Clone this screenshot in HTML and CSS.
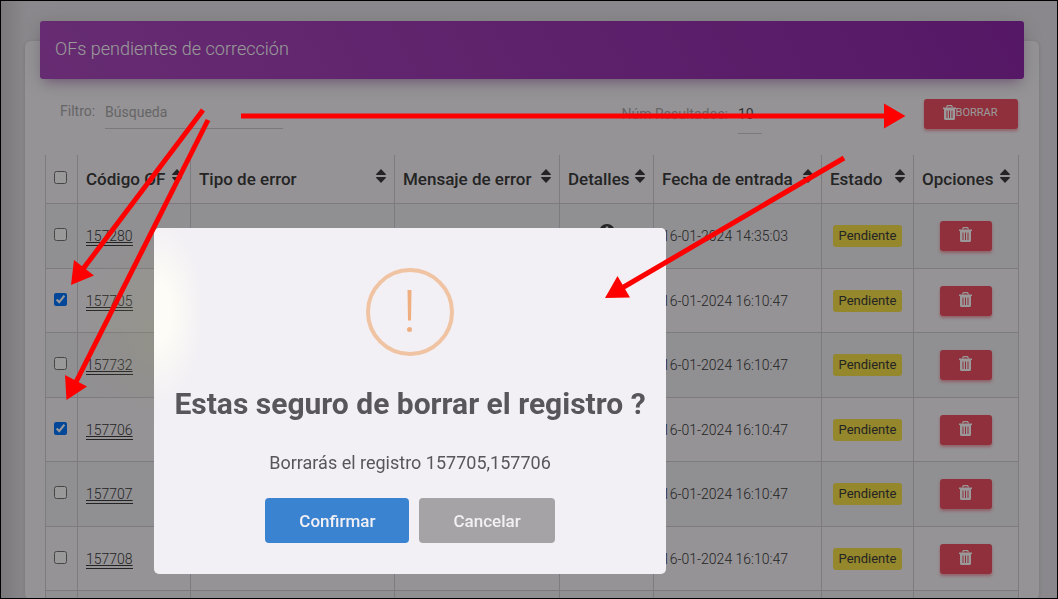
FILE: index.html
```html
<!DOCTYPE html>
<html lang="es">
<head>
    <meta charset="UTF-8">
    <meta name="viewport" content="width=device-width, initial-scale=1.0">
    <title>OFs pendientes de corrección</title>
    <link rel="stylesheet" href="styles.css">
</head>
<body>
    <!-- Shared icons -->
    <svg class="sprite" aria-hidden="true">
        <symbol id="trash" viewBox="0 0 13 15">
            <path d="M0 2.500h13v1.600H0z"/>
            <path d="M3.500 2.600L4.400.6h4.200l.9 2" fill="none" stroke="currentColor" stroke-width="1.200"/>
            <path fill-rule="evenodd" d="M1 4h11v9.400c0 .9-.6 1.500-1.500 1.500h-8C1.600 14.900 1 14.300 1 13.400zM3.500 5.400v7.600h1V5.400zM6 5.400v7.600h1V5.400zM8.500 5.400v7.600h1V5.400z"/>
        </symbol>
        <symbol id="sort" viewBox="0 0 10 14">
            <path d="M5 0l5 5.200q0 .8-.8.8H.8Q0 6 0 5.200zM5 14l5-5.200q0-.8-.8-.8H.8Q0 8 0 8.800z"/>
        </symbol>
        <symbol id="info" viewBox="0 0 16 16">
            <path fill-rule="evenodd" d="M8 0a8 8 0 1 0 0 16A8 8 0 0 0 8 0zM6.700 2.600h2.600v2.300H6.700zM6.200 6.800h3v5h1v1.400H6v-1.400h1V8.200h-.8z"/>
        </symbol>
    </svg>

    <main class="page">
        <section class="card">
            <header class="card-header">
                <h1 class="card-title">OFs pendientes de corrección</h1>
            </header>
            <form class="toolbar">
                <div class="field">
                    <label for="filtro">Filtro:</label>
                    <input class="search" id="filtro" type="text" placeholder="Búsqueda">
                </div>
                <div class="field results">
                    <label for="num">Núm Resultados:</label>
                    <select class="count" id="num"><option>10</option><option>25</option><option>50</option></select>
                </div>
                <button class="btn-danger btn-borrar" type="button"><svg class="trash"><use href="#trash"/></svg>BORRAR</button>
            </form>
            <table class="table">
                <colgroup>
                    <col class="c-check"><col class="c-code"><col class="c-type"><col class="c-msg">
                    <col class="c-detail"><col class="c-date"><col class="c-state"><col class="c-options">
                </colgroup>
                <thead>
                    <tr>
                        <th><input class="check" type="checkbox" aria-label="Seleccionar todos"></th>
                        <th><div class="th">Código OF<svg class="sort"><use href="#sort"/></svg></div></th>
                        <th><div class="th">Tipo de error<svg class="sort"><use href="#sort"/></svg></div></th>
                        <th><div class="th">Mensaje de error<svg class="sort"><use href="#sort"/></svg></div></th>
                        <th><div class="th">Detalles<svg class="sort"><use href="#sort"/></svg></div></th>
                        <th><div class="th">Fecha de entrada<svg class="sort"><use href="#sort"/></svg></div></th>
                        <th><div class="th">Estado<svg class="sort"><use href="#sort"/></svg></div></th>
                        <th><div class="th">Opciones<svg class="sort"><use href="#sort"/></svg></div></th>
                    </tr>
                </thead>
                <tbody id="rows"></tbody>
            </table>
        </section>
    </main>

    <div class="overlay"></div>

    <div class="modal" role="dialog" aria-modal="true" aria-labelledby="modal-title">
        <svg class="modal-icon" viewBox="0 0 88 88">
            <circle cx="44" cy="44" r="42" fill="none" stroke="#f0c3a2" stroke-width="4"/>
            <path d="M41.500 22h4l-.5 30.500h-3z" fill="#efae80"/>
            <circle cx="43.500" cy="61.500" r="2.500" fill="#efae80"/>
        </svg>
        <h2 class="modal-title" id="modal-title">Estas seguro de borrar el registro ?</h2>
        <p class="modal-text">Borrarás el registro 157705,157706</p>
        <div class="modal-actions">
            <button class="btn btn-confirm" type="button">Confirmar</button>
            <button class="btn btn-cancel" type="button">Cancelar</button>
        </div>
    </div>

    <!-- Help arrows -->
    <svg class="arrows" width="1058" height="599" viewBox="0 0 1058 599" aria-hidden="true">
        <g stroke="#f00" stroke-width="5">
            <path d="M241 116H886"/>
            <path d="M203 110L83 269"/>
            <path d="M208 120L76 382"/>
            <path d="M844 158L622 288"/>
        </g>
        <g fill="#f00">
            <path d="M884 103.500L905.500 116L884 128.500z"/>
            <path d="M71 285L74 260L94 275.500z"/>
            <path d="M66.500 400L65 375L87 386.500z"/>
            <path d="M605 298L617.500 276L630 297.500z"/>
        </g>
    </svg>

    <script src="script.js"></script>
</body>
</html>
```
FILE: script.js
```js
const rows = [
    { code: "157280", date: "16-01-2024 14:35:03", checked: false },
    { code: "157705", date: "16-01-2024 16:10:47", checked: true },
    { code: "157732", date: "16-01-2024 16:10:47", checked: false },
    { code: "157706", date: "16-01-2024 16:10:47", checked: true },
    { code: "157707", date: "16-01-2024 16:10:47", checked: false },
    { code: "157708", date: "16-01-2024 16:10:47", checked: false }
];

const rowHtml = (row) => `
    <tr>
        <td><input class="check" type="checkbox" aria-label="${row.code}" ${row.checked ? "checked" : ""}></td>
        <td><a class="code" href="#">${row.code}</a></td>
        <td></td>
        <td></td>
        <td><svg class="info"><use href="#info"/></svg></td>
        <td>${row.date}</td>
        <td class="center"><span class="badge">Pendiente</span></td>
        <td class="center"><button class="btn-danger" type="button" aria-label="Borrar"><svg class="trash"><use href="#trash"/></svg></button></td>
    </tr>`;

// Short empty row closes the list
document.getElementById("rows").innerHTML =
    rows.map(rowHtml).join("") + `<tr class="tail">` + "<td></td>".repeat(8) + "</tr>";
```
FILE: styles.css
```css
* {
    box-sizing: border-box;
}
body {
    margin: 0;
    font-family: Roboto, sans-serif;
    font-size: 14px;
    font-weight: 300;
    color: #3c3c3c;
    background: linear-gradient(90deg, #ccc9ce 0, #e6e3e9 26px, #e6e3e9 100%);
}
button,
input,
select {
    font-family: inherit;
}
svg {
    fill: currentColor;
}
.sprite {
    display: none;
}
.page {
    height: 100vh;
    overflow: hidden;
    padding: 41px 19px 0 25px;
}
.card {
    display: flow-root;
    background: #f8f5fa;
    border-radius: 6px;
    padding: 0 20px;
    box-shadow: 0 1px 4px rgba(0, 0, 0, 0.14);
}
.card-header {
    margin: -20px -5px 0;
    padding: 14px 15px 16px;
    border-radius: 3px;
    background: linear-gradient(60deg, #ab4abe, #8e28aa);
    box-shadow: 0 4px 20px rgba(0, 0, 0, 0.14), 0 7px 10px -5px rgba(156, 39, 176, 0.4);
}
.card-title {
    margin: 0;
    font-size: 18px;
    font-weight: 300;
    line-height: 28px;
    color: #fff;
}

/* Filter bar */
.toolbar {
    display: flex;
    align-items: flex-start;
    padding: 20px 1px 0 15px;
    height: 76px;
}
.field {
    display: flex;
    align-items: flex-start;
    gap: 10px;
    font-weight: 400;
    line-height: 24px;
    color: #aaa;
}
.search,
.count {
    border: 0;
    border-bottom: 1px solid #ccc;
    border-radius: 0;
    padding: 0;
    background: transparent;
    font-size: 14px;
    color: #555;
}
.search {
    width: 178px;
    height: 30px;
    padding-bottom: 4px;
}
.search::placeholder {
    color: #aaa;
}
.results {
    margin: 0 162px 0 auto;
    padding-top: 3px;
}
.count {
    width: 24px;
    height: 32px;
    padding-bottom: 8px;
    appearance: none;
}
.btn-danger {
    display: inline-flex;
    align-items: center;
    justify-content: center;
    width: 52px;
    height: 30px;
    padding: 0 2px 3px 0;
    border: 0;
    border-radius: 3px;
    color: #fff;
    background: #f05064;
    box-shadow: 0 2px 3px rgba(240, 80, 100, 0.5);
    font-size: 11px;
}
.btn-borrar {
    width: 94px;
}
.trash {
    width: 13px;
    height: 15px;
}

/* Table */
.table {
    width: 100%;
    table-layout: fixed;
    border-spacing: 0;
    border-left: 1px solid #d2ced5;
}
.c-check { width: 32px; }
.c-code { width: 113px; }
.c-msg { width: 165px; }
.c-detail { width: 94px; }
.c-date { width: 168px; }
.c-state { width: 92px; }
.c-options { width: 105px; }
th,
td {
    padding: 0 8px;
    border-right: 1px solid #d2ced5;
    border-bottom: 1px solid #d2ced5;
    text-align: left;
    white-space: nowrap;
}
th {
    height: 49px;
    font-size: 17px;
    font-weight: 500;
}
td {
    height: 64px;
}
tr:nth-child(odd) td {
    height: 65px;
}
tr.tail td {
    height: 9px;
}
tbody tr:nth-child(odd) {
    background: #f1eef3;
}
.th {
    display: flex;
    align-items: center;
    justify-content: space-between;
}
.sort {
    width: 10px;
    height: 14px;
    margin-bottom: 6px;
}
.center {
    text-align: center;
}
.check {
    display: block;
    width: 13px;
    height: 13px;
    margin: 0 0 3px;
}
.code {
    padding-bottom: 1px;
    border-bottom: 1px solid #3c3c3c;
    color: inherit;
    text-decoration: underline;
}
.info {
    display: block;
    width: 16px;
    height: 16px;
    margin: 0 auto 9px;
}
.badge {
    display: inline-block;
    padding: 0 6px;
    border-radius: 3px;
    background: #f7e14a;
    font-size: 13px;
    font-weight: 400;
    line-height: 22px;
}

/* Confirmation dialog */
.overlay {
    position: fixed;
    inset: 0;
    border: 1px solid #000;
    background: radial-gradient(ellipse 90px 100px at 165px 325px, rgba(150, 150, 110, 0.3), transparent), rgba(0, 0, 0, 0.4);
}
.modal {
    position: absolute;
    top: 228px;
    left: 154px;
    width: 512px;
    padding: 40px 20px 31px;
    display: flex;
    flex-direction: column;
    align-items: center;
    border-radius: 5px;
    background: radial-gradient(ellipse 44px 90px at 4px 84px, #fdfcf6 30%, #f2f0f4 100%);
    color: #58565a;
}
.modal-icon {
    width: 88px;
    height: 88px;
}
.modal-title {
    margin: 28px 0 0;
    font-size: 30px;
    font-weight: 700;
    line-height: 40px;
    white-space: nowrap;
}
.modal-text {
    margin: 26px 0 0;
    font-size: 18px;
    font-weight: 400;
    line-height: 26px;
}
.modal-actions {
    display: flex;
    gap: 10px;
    margin-top: 22px;
}
.btn {
    height: 45px;
    padding: 0 34px;
    border: 0;
    border-radius: 4px;
    color: #f2f0f4;
    font-size: 17px;
    font-weight: 500;
}
.btn-confirm {
    background: #3a83d0;
}
.btn-cancel {
    background: #a5a3a6;
}
.arrows {
    position: absolute;
    top: 0;
    left: 0;
    pointer-events: none;
}
```
